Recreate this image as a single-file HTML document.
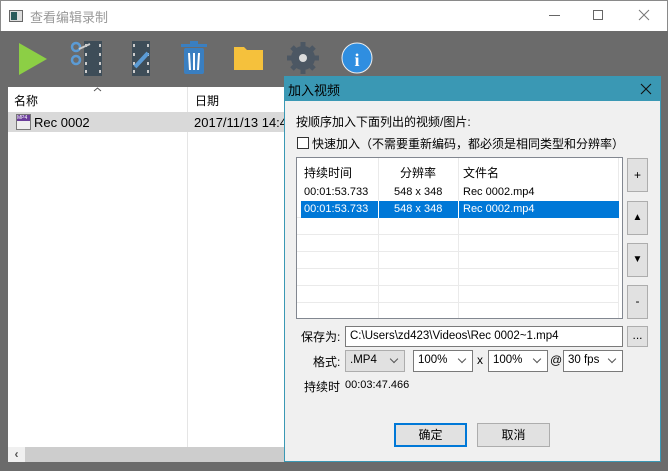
<!DOCTYPE html>
<html><head><meta charset="utf-8"><style>
*{box-sizing:border-box;margin:0;padding:0}
body{width:668px;height:471px;overflow:hidden;background:#6b6b6b;font-family:"Liberation Sans","Noto Sans CJK SC",sans-serif;font-size:12px;color:#000;position:relative}
.abs{position:absolute}
.t{white-space:nowrap}
.btn{position:absolute;background:#e1e1e1;border:1px solid #adadad;text-align:center}
.sel{position:absolute;background:#fff;border:1px solid #7a7a7a;height:22px;padding:3px 4px;font-size:11.5px}
.sel:after{content:"";position:absolute;right:7px;top:5px;width:5px;height:5px;border-right:1px solid #555;border-bottom:1px solid #555;transform:rotate(45deg)}
</style></head><body>
<div class="abs" style="left:0;top:0;width:668px;height:31px;background:#fff;border:1px solid #8a8a8a;border-bottom:none"></div>
<div class="abs" style="left:9px;top:10px;width:14px;height:12px;border:1px solid #666;background:#ddd"><div style="position:absolute;left:1px;top:1px;width:6px;height:8px;background:#2a5a5a"></div></div>
<div class="abs t" style="left:30px;top:7px;font-size:13px;color:#999">查看编辑录制</div>
<div class="abs" style="left:549px;top:15px;width:11px;height:1px;background:#666"></div>
<div class="abs" style="left:593px;top:10px;width:10px;height:10px;border:1px solid #666"></div>
<svg class="abs" style="left:638px;top:9px" width="12" height="12"><path d="M1 1L11 11M11 1L1 11" stroke="#777" stroke-width="1"/></svg>
<svg class="abs" style="left:0;top:31px" width="390" height="56">
<polygon points="19,12 19,44 47,28" fill="#8ccf45"/>
<rect x="84" y="10" width="18" height="35" fill="#3e4d58"/>
<g fill="#ccc"><rect x="85" y="13" width="2" height="3"/><rect x="85" y="22" width="2" height="3"/><rect x="85" y="31" width="2" height="3"/><rect x="85" y="39" width="2" height="3"/><rect x="99" y="13" width="2" height="3"/><rect x="99" y="22" width="2" height="3"/><rect x="99" y="31" width="2" height="3"/><rect x="99" y="39" width="2" height="3"/></g>
<circle cx="76" cy="16" r="4" fill="none" stroke="#5b9bd5" stroke-width="2.5"/><circle cx="76" cy="29" r="4" fill="none" stroke="#5b9bd5" stroke-width="2.5"/>
<line x1="79" y1="18" x2="90" y2="13" stroke="#ccc" stroke-width="2"/>
<rect x="132" y="10" width="18" height="35" fill="#3e4d58"/>
<g fill="#ccc"><rect x="133" y="13" width="2" height="3"/><rect x="133" y="22" width="2" height="3"/><rect x="133" y="31" width="2" height="3"/><rect x="133" y="39" width="2" height="3"/><rect x="147" y="13" width="2" height="3"/><rect x="147" y="22" width="2" height="3"/><rect x="147" y="31" width="2" height="3"/><rect x="147" y="39" width="2" height="3"/></g>
<line x1="135" y1="36" x2="148" y2="22" stroke="#5b9bd5" stroke-width="4"/>
<rect x="184" y="17" width="20" height="26" rx="2" fill="#3a7fc1"/><rect x="181" y="13" width="26" height="3" fill="#3a7fc1"/><rect x="190" y="10" width="8" height="3" fill="#3a7fc1"/>
<g stroke="#fff" stroke-width="2"><line x1="189" y1="22" x2="190" y2="39"/><line x1="194" y1="22" x2="194" y2="39"/><line x1="199" y1="22" x2="198" y2="39"/></g>
<path d="M234 16 h10 l3 3 h16 v20 h-29z" fill="#f5c13c"/>
<circle cx="303" cy="27" r="12" fill="#4c5763"/>
<g stroke="#4c5763" stroke-width="5"><line x1="303" y1="11" x2="303" y2="43"/><line x1="287" y1="27" x2="319" y2="27"/><line x1="292" y1="16" x2="314" y2="38"/><line x1="314" y1="16" x2="292" y2="38"/></g>
<circle cx="303" cy="27" r="4" fill="#dcdcdc"/>
<circle cx="357" cy="27" r="15" fill="#2f8ee0" stroke="#eee" stroke-width="1"/>
<text x="357" y="35" text-anchor="middle" fill="#fff" font-size="18" font-weight="bold" font-family="Liberation Serif">i</text>
</svg>
<div class="abs" style="left:8px;top:87px;width:290px;height:375px;background:#fff"></div>
<div class="abs" style="left:187px;top:87px;width:1px;height:360px;background:#e5e5e5"></div>
<svg class="abs" style="left:93px;top:87px" width="9" height="5"><path d="M1 4L4.5 1L8 4" stroke="#555" fill="none"/></svg>
<div class="abs t" style="left:14px;top:92px">名称</div>
<div class="abs t" style="left:195px;top:92px">日期</div>
<div class="abs" style="left:8px;top:112px;width:290px;height:20px;background:#d9d9d9"></div>
<div class="abs" style="left:16px;top:114px;width:15px;height:16px;border:1px solid #777;background:#eee"><div style="background:#6a3d9a;height:6px;font-size:5px;color:#fff;line-height:6px">MP4</div></div>
<div class="abs t" style="left:34px;top:115px;font-size:13px">Rec 0002</div>
<div class="abs t" style="left:194px;top:115px;font-size:13px">2017/11/13 14:4</div>
<div class="abs" style="left:8px;top:447px;width:290px;height:15px;background:#cdcdcd"></div>
<div class="abs" style="left:8px;top:447px;width:17px;height:15px;background:#f0f0f0;text-align:center;font-size:12px;line-height:15px;color:#555;font-weight:bold">‹</div>
<div class="abs" style="left:284px;top:76px;width:377px;height:386px;background:#f0f0f0;border:1px solid #3a98b4"></div>
<div class="abs" style="left:284px;top:76px;width:377px;height:25px;background:#3a98b4"></div>
<div class="abs t" style="left:288px;top:80px;font-size:13px">加入视频</div>
<svg class="abs" style="left:640px;top:83px" width="12" height="12"><path d="M1 1L11 11M11 1L1 11" stroke="#111" stroke-width="1.1"/></svg>
<div class="abs t" style="left:296px;top:113px">按顺序加入下面列出的视频/图片:</div>
<div class="abs" style="left:297px;top:137px;width:12px;height:12px;border:1px solid #333;background:#fff"></div>
<div class="abs t" style="left:312px;top:135px">快速加入（不需要重新编码，都必须是相同类型和分辨率）</div>
<div class="abs" style="left:296px;top:157px;width:327px;height:162px;background:#fff;border:1px solid #828790"></div>
<svg class="abs" style="left:297px;top:158px" width="322" height="160">
<g stroke="#eaeaea"><line x1="0" y1="59.5" x2="322" y2="59.5"/><line x1="0" y1="76.5" x2="322" y2="76.5"/><line x1="0" y1="93.5" x2="322" y2="93.5"/><line x1="0" y1="110.5" x2="322" y2="110.5"/><line x1="0" y1="127.5" x2="322" y2="127.5"/><line x1="0" y1="144.5" x2="322" y2="144.5"/>
<line x1="81.5" y1="0" x2="81.5" y2="160"/><line x1="161.5" y1="0" x2="161.5" y2="160"/><line x1="321.5" y1="0" x2="321.5" y2="160"/></g>
</svg>
<div class="abs" style="left:301px;top:201px;width:318px;height:17px;background:#0078d7"></div>
<div class="abs" style="left:378px;top:201px;width:1px;height:17px;background:#fff"></div>
<div class="abs" style="left:458px;top:201px;width:1px;height:17px;background:#fff"></div>
<div class="abs t" style="left:304px;top:164px">持续时间</div>
<div class="abs t" style="left:400px;top:164px">分辨率</div>
<div class="abs t" style="left:463px;top:164px">文件名</div>
<div class="abs t" style="left:304px;top:186px;font-size:11px">00:01:53.733</div>
<div class="abs t" style="left:394px;top:186px;font-size:11px">548 x 348</div>
<div class="abs t" style="left:463px;top:186px;font-size:11px">Rec 0002.mp4</div>
<div class="abs t" style="left:304px;top:203px;font-size:11px;color:#fff">00:01:53.733</div>
<div class="abs t" style="left:394px;top:203px;font-size:11px;color:#fff">548 x 348</div>
<div class="abs t" style="left:463px;top:203px;font-size:11px;color:#fff">Rec 0002.mp4</div>
<div class="btn" style="left:627px;top:158px;width:21px;height:34px;line-height:32px">+</div>
<div class="btn" style="left:627px;top:201px;width:21px;height:34px;line-height:32px;font-size:10px">▲</div>
<div class="btn" style="left:627px;top:243px;width:21px;height:34px;line-height:32px;font-size:10px">▼</div>
<div class="btn" style="left:627px;top:285px;width:21px;height:34px;line-height:30px">-</div>
<div class="abs t" style="left:301px;top:328px">保存为:</div>
<div class="abs t" style="left:345px;top:326px;width:278px;height:21px;background:#fff;border:1px solid #7a7a7a;padding:3px 4px;font-size:11.5px">C:\Users\zd423\Videos\Rec 0002~1.mp4</div>
<div class="btn" style="left:627px;top:326px;width:21px;height:21px;line-height:16px">...</div>
<div class="abs t" style="left:313px;top:353px">格式:</div>
<div class="sel" style="left:345px;top:350px;width:60px;background:#e1e1e1;border-color:#adadad">.MP4</div>
<div class="sel" style="left:413px;top:350px;width:60px">100%</div>
<div class="abs t" style="left:477px;top:353px">x</div>
<div class="sel" style="left:488px;top:350px;width:60px">100%</div>
<div class="abs t" style="left:550px;top:353px">@</div>
<div class="sel" style="left:563px;top:350px;width:60px">30 fps</div>
<div class="abs t" style="left:304px;top:378px">持续时</div>
<div class="abs t" style="left:345px;top:379px;font-size:11px">00:03:47.466</div>
<div class="btn" style="left:394px;top:423px;width:73px;height:24px;line-height:21px;border:2px solid #0078d7">确定</div>
<div class="btn" style="left:477px;top:423px;width:73px;height:24px;line-height:22px">取消</div>
</body></html>
